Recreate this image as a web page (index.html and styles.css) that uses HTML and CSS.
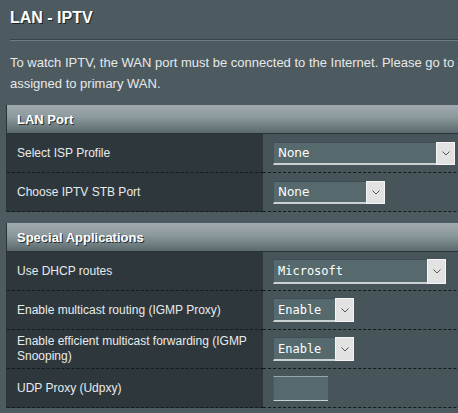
FILE: index.html
```html
<!DOCTYPE html>
<html lang="en">
<head>
  <meta charset="UTF-8" />
  <title>LAN - IPTV</title>
  <link rel="stylesheet" href="styles.css">
</head>
<body>
  <div class="page">
    <div class="intro">
      <h1>LAN - IPTV</h1>
      <div class="splitline"></div>
      <p class="desc">To watch IPTV, the WAN port must be connected to the Internet. Please go to <a href="#">WAN - Dual WAN</a> to confirm that WAN port is<br>assigned to primary WAN.</p>
    </div>

    <table class="form-table">
      <thead>
        <tr><th colspan="2">LAN Port</th></tr>
      </thead>
      <tbody>
        <tr>
          <td class="label">Select ISP Profile</td>
          <td class="field">
            <div class="select wide"><span class="val">None</span><span class="arrow"><svg viewBox="0 0 8 5" width="8" height="5"><path d="M0.5 0.5 L4 4 L7.5 0.5" fill="none" stroke="#555" stroke-width="1"/></svg></span></div>
          </td>
        </tr>
        <tr>
          <td class="label">Choose IPTV STB Port</td>
          <td class="field">
            <div class="select stb"><span class="val">None</span><span class="arrow"><svg viewBox="0 0 8 5" width="8" height="5"><path d="M0.5 0.5 L4 4 L7.5 0.5" fill="none" stroke="#555" stroke-width="1"/></svg></span></div>
          </td>
        </tr>
      </tbody>
    </table>

    <table class="form-table">
      <thead>
        <tr><th colspan="2">Special Applications</th></tr>
      </thead>
      <tbody>
        <tr>
          <td class="label">Use DHCP routes</td>
          <td class="field">
            <div class="select mono dhcp"><span class="val">Microsoft</span><span class="arrow"><svg viewBox="0 0 8 5" width="8" height="5"><path d="M0.5 0.5 L4 4 L7.5 0.5" fill="none" stroke="#555" stroke-width="1"/></svg></span></div>
          </td>
        </tr>
        <tr>
          <td class="label">Enable multicast routing (IGMP Proxy)</td>
          <td class="field">
            <div class="select mono small"><span class="val">Enable</span><span class="arrow"><svg viewBox="0 0 8 5" width="8" height="5"><path d="M0.5 0.5 L4 4 L7.5 0.5" fill="none" stroke="#555" stroke-width="1"/></svg></span></div>
          </td>
        </tr>
        <tr>
          <td class="label">Enable efficient multicast forwarding (IGMP Snooping)</td>
          <td class="field">
            <div class="select mono small"><span class="val">Enable</span><span class="arrow"><svg viewBox="0 0 8 5" width="8" height="5"><path d="M0.5 0.5 L4 4 L7.5 0.5" fill="none" stroke="#555" stroke-width="1"/></svg></span></div>
          </td>
        </tr>
        <tr>
          <td class="label">UDP Proxy (Udpxy)</td>
          <td class="field">
            <input class="text-input" type="text" value="">
          </td>
        </tr>
      </tbody>
    </table>
  </div>
</body>
</html>
```

FILE: styles.css
```css
html, body {
  margin: 0;
  padding: 0;
  height: 100%;
  overflow: hidden;
  background: #4d5a5f;
  font-family: 'Liberation Sans', Arial, sans-serif;
  color: #ebebeb;
}

.page {
  width: 760px;
  padding: 0 0 0 6px;
}

.intro {
  padding: 0 0 0 4px;
}

h1 {
  margin: 0;
  padding-top: 9px;
  height: 20px;
  font-size: 16px;
  font-weight: bold;
  color: #fff;
  text-shadow: 1px 1px 0 #1d2528;
}

.splitline {
  margin-top: 10px;
  height: 0;
  border-top: 1px solid #36434a;
  border-bottom: 1px solid #6e7b80;
}

p.desc {
  margin: 11px 0 0 0;
  font-size: 13px;
  line-height: 21px;
  color: #e6e9ea;
  white-space: nowrap;
}

p.desc a {
  color: #e6e9ea;
}

.form-table {
  width: 746px;
  border-collapse: collapse;
  margin-top: 11px;
  border-left: 1px solid #2a3437;
}

.form-table + .form-table {
  margin-top: 11px;
}

.form-table th {
  height: 28px;
  padding: 0 0 0 10px;
  text-align: left;
  font-size: 13px;
  font-weight: bold;
  color: #fff;
  text-shadow: 1px 1px 0 #2b3336;
  background: linear-gradient(to bottom, #a0abaf, #8a979b 45%, #5b686c);
  border-bottom: 1px solid #2a3437;
}

.form-table td {
  height: 38px;
  border-bottom: 1px dashed #151b1d;
}

.form-table td.label {
  width: 236px;
  padding: 0 10px 0 10px;
  background: #2e383c;
  font-size: 12px;
  line-height: 15px;
  color: #e8ebec;
}

.form-table td.field {
  padding: 0 0 0 10px;
  background: #475459;
}

.select {
  display: flex;
  height: 23px;
  box-sizing: border-box;
  background: #566a6e;
  border-top: 1px solid #3f4e52;
  border-left: 1px solid #44555a;
  border-bottom: 2px solid #c9d1d2;
  color: #fff;
  font-family: 'DejaVu Sans', Verdana, sans-serif;
  font-size: 12px;
}

.select .val {
  flex: 1;
  padding-left: 4px;
  line-height: 20px;
}

.select .arrow {
  width: 19px;
  display: flex;
  align-items: center;
  justify-content: center;
  background: #e2e2e2;
  border: 1px solid #f5f5f5;
  box-sizing: border-box;
  margin-top: -1px;
  margin-bottom: -2px;
}

.select.wide { width: 182px; }
.select.stb { width: 112px; }

.select.mono {
  font-family: 'DejaVu Sans Mono', 'Liberation Mono', monospace;
  font-size: 12px;
  height: 25px;
}

.select.mono .val {
  line-height: 22px;
}

.select.dhcp { width: 173px; }
.select.small { width: 81px; height: 24px; }

.text-input {
  display: block;
  width: 55px;
  height: 25px;
  box-sizing: border-box;
  margin: 0;
  padding: 0 4px;
  background: #566a6e;
  border: none;
  border-top: 1px solid #9aa7aa;
  border-bottom: 1px solid #c9d1d2;
  border-left: 1px solid #4a5a5f;
  color: #fff;
  font-family: 'DejaVu Sans Mono', monospace;
  font-size: 12px;
}
```
